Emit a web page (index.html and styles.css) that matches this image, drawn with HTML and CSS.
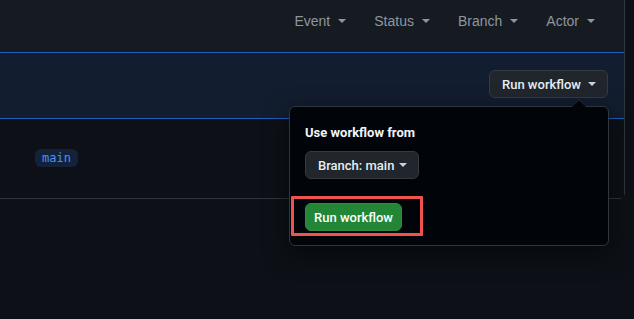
FILE: index.html
```html
<!DOCTYPE html>
<html>
<head>
<meta charset="utf-8">
<link rel="stylesheet" href="styles.css">
</head>
<body>
<div class="box">
  <div class="box-header">
    <div class="filter">Event <span class="caret"></span></div>
    <div class="filter">Status <span class="caret"></span></div>
    <div class="filter">Branch <span class="caret"></span></div>
    <div class="filter">Actor <span class="caret"></span></div>
  </div>
  <div class="row-blue">
    <div class="dispatch">
      <button class="btn">Run workflow <span class="caret caret-light"></span></button>
      <div class="popover">
        <div class="popover-title">Use workflow from</div>
        <button class="btn btn-branch">Branch: main <span class="caret caret-light"></span></button>
        <div class="actions">
          <button class="btn btn-primary">Run workflow</button>
          <span class="highlight"></span>
        </div>
      </div>
    </div>
  </div>
  <div class="row">
    <span class="branch-tag">main</span>
  </div>
</div>
</body>
</html>
```
FILE: styles.css
```css
* { box-sizing: border-box; }
html, body { margin: 0; padding: 0; }
body {
  background: #0d1117;
  width: 634px;
  height: 319px;
  overflow: hidden;
  font-family: "Roboto", "Liberation Sans", sans-serif;
  color: #e6edf3;
}
.box {
  width: 625px;
  border-right: 1px solid #30363d;
  border-bottom: 1px solid #30363d;
  border-bottom-right-radius: 6px;
}
.box-header {
  height: 52px;
  background: #161b22;
  display: flex;
  justify-content: flex-end;
  align-items: center;
  padding-right: 29px;
  gap: 28px;
  padding-bottom: 10px;
}
.filter {
  font-family: "Liberation Sans", sans-serif;
  font-size: 14px;
  color: #8d96a0;
  display: flex;
  align-items: center;
  gap: 8px;
}
.caret {
  display: inline-block;
  width: 0; height: 0;
  border-left: 4px solid transparent;
  border-right: 4px solid transparent;
  border-top: 4px solid #8d96a0;
}
.caret-light { border-top-color: #c9d1d9; }
.row-blue {
  height: 67px;
  background: #121d2f;
  border-top: 1px solid #1f5fbf;
  border-bottom: 1px solid #1f5fbf;
  display: flex;
  justify-content: flex-end;
  align-items: flex-start;
  padding: 17px 16px 0 0;
}
.dispatch { position: relative; }
.btn {
  font-family: inherit;
  height: 28px;
  padding: 0 11px 0 12px;
  font-size: 13px;
  font-weight: 500;
  color: #e6edf3;
  background: #21262d;
  border: 1px solid #363b42;
  border-radius: 6px;
  display: inline-flex;
  align-items: center;
  gap: 7px;
}
.popover {
  position: absolute;
  top: 36px;
  right: -1px;
  width: 320px;
  height: 140px;
  background: #010409;
  border: 1px solid #30363d;
  border-radius: 6px;
  padding: 16px 15px;
  z-index: 5;
  box-shadow: 0 8px 24px rgba(1,4,9,0.6);
}
.popover::before, .popover::after {
  content: "";
  position: absolute;
  right: 22px;
  width: 0; height: 0;
  border-left: 7px solid transparent;
  border-right: 7px solid transparent;
}
.popover::before { top: -8px; border-bottom: 8px solid #30363d; }
.popover::after { top: -7px; border-bottom: 7px solid #010409; }
.popover-title {
  font-size: 13px;
  font-weight: 700;
  color: #f0f6fc;
  margin-bottom: 9px;
  line-height: 19px;
}
.btn-branch {
  font-weight: 500;
  padding: 0 11px 0 12px;
  gap: 5px;
}
.actions {
  position: relative;
  margin-top: 24px;
}
.btn-primary {
  background: #238636;
  border-color: #2f8c42;
  color: #ffffff;
  padding: 0 8px;
}
.highlight {
  position: absolute;
  left: -14px;
  top: -7px;
  width: 132px;
  height: 40px;
  border: 3px solid #f2524f;
  border-radius: 1px;
}
.row {
  height: 79px;
  background: #0d1117;
  padding: 28px 0 0 35px;
}
.branch-tag {
  display: inline-block;
  font-family: "DejaVu Sans Mono", "Liberation Mono", monospace;
  font-size: 12px;
  line-height: 18px;
  padding: 0 7px;
  color: #4493f8;
  background: #14213a;
  border-radius: 6px;
}
```
